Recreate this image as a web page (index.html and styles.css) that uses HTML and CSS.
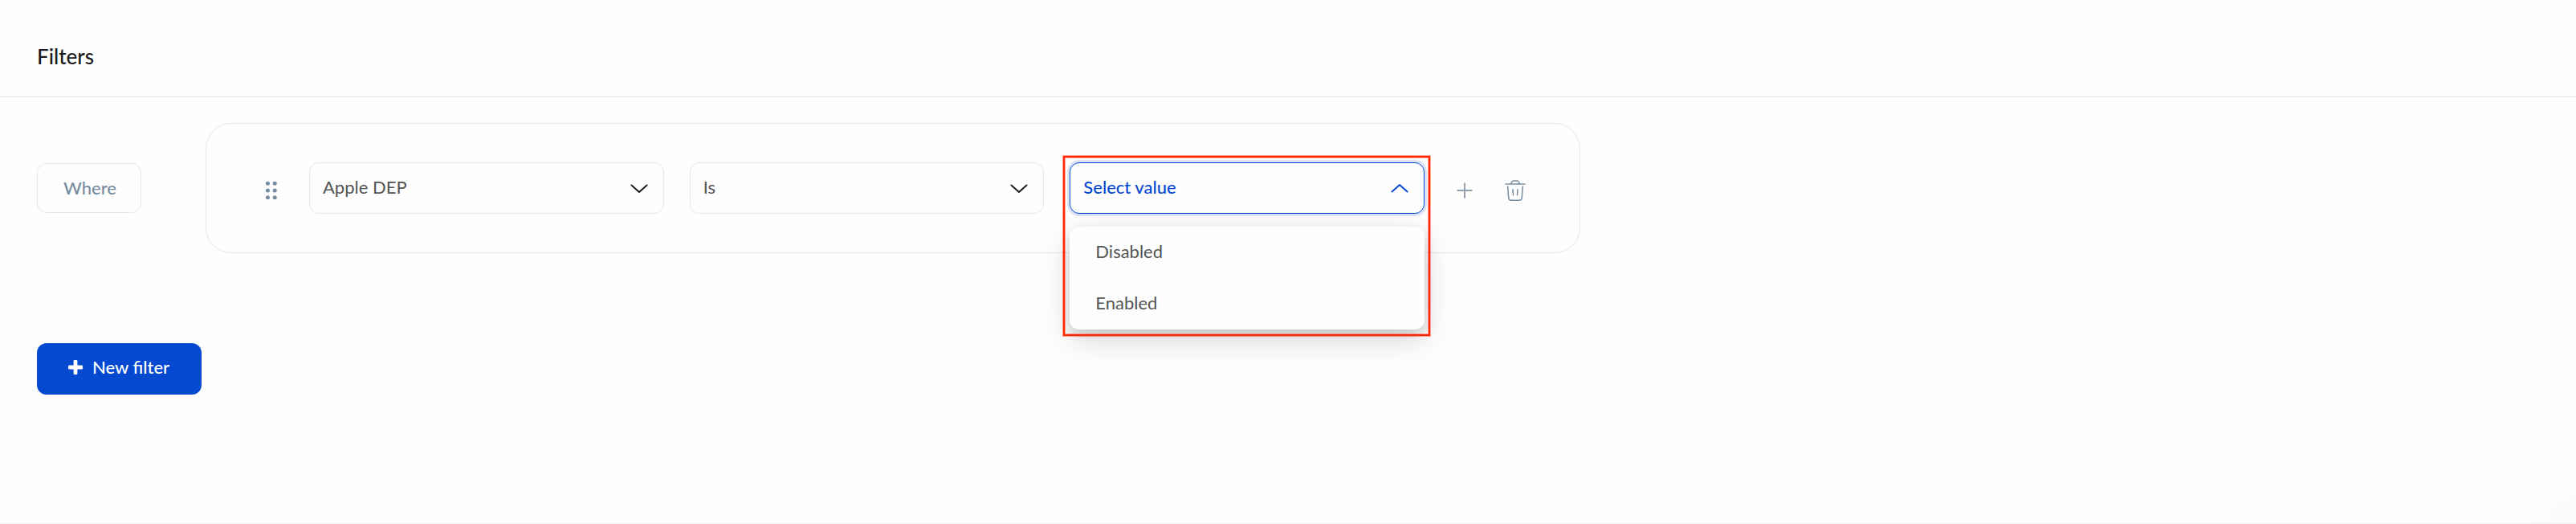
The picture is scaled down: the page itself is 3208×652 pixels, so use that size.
FILE: index.html
```html
<!DOCTYPE html>
<html lang="en">
<head>
<meta charset="utf-8">
<meta name="viewport" content="width=device-width, initial-scale=1">
<title>Filters</title>
<link rel="stylesheet" href="styles.css">
</head>
<body>
<div class="page">
  <header class="page-header">
    <h1 class="page-title">Filters</h1>
  </header>
  <main class="content">
    <div class="filter-row">
      <span class="where">Where</span>
      <section class="filter-card" aria-label="Filter condition">
        <button class="icon-button handle" type="button" aria-label="Reorder">
          <svg width="14" height="24" viewBox="0 0 14 24" fill="currentColor"><circle cx="2.4" cy="3.3" r="2.5"/><circle cx="11.2" cy="3.3" r="2.5"/><circle cx="2.4" cy="12" r="2.5"/><circle cx="11.2" cy="12" r="2.5"/><circle cx="2.4" cy="20.7" r="2.5"/><circle cx="11.2" cy="20.7" r="2.5"/></svg>
        </button>
        <div class="fields">
          <div class="field">
            <select class="select" aria-label="Attribute"><option>Apple DEP</option></select>
            <svg class="chevron" width="24" height="14" viewBox="0 0 24 14"><path d="M2.500 2.500 12 11l9.500-8.500"/></svg>
          </div>
          <div class="field">
            <select class="select" aria-label="Operator"><option>Is</option></select>
            <svg class="chevron" width="24" height="14" viewBox="0 0 24 14"><path d="M2.500 2.500 12 11l9.500-8.500"/></svg>
          </div>
          <div class="field field-open">
            <select class="select" aria-label="Value"><option>Select value</option></select>
            <svg class="chevron" width="24" height="14" viewBox="0 0 24 14"><path d="M2.500 10.500 12 2l9.500 8.500"/></svg>
            <ul class="menu" role="listbox" aria-label="Values">
              <li class="menu-item" role="option">Disabled</li>
              <li class="menu-item" role="option">Enabled</li>
            </ul>
            <div class="highlight"></div>
          </div>
        </div>
        <div class="actions">
          <button class="icon-button" type="button" aria-label="Add condition">
            <svg width="20" height="20" viewBox="0 0 20 20" fill="none" stroke="currentColor" stroke-width="2" opacity=".8"><path d="M10 .5v19M.5 10h19"/></svg>
          </button>
          <button class="icon-button" type="button" aria-label="Delete condition">
            <svg width="26" height="26" viewBox="0 0 26 26" fill="none" stroke="currentColor" stroke-width="1.500" stroke-linecap="round" stroke-linejoin="round"><path d="M1 5h24M7.800 4.700 8.600 2.500Q9.200 1 10.600 1h4.800q1.400 0 2 1.500l.8 2.200M3.700 8l1 14.200Q5 25.300 8 25.300h10q3 0 3.300-3.100L22.300 8M10 11.800l.5 7M16 11.800l-.5 7"/></svg>
          </button>
        </div>
      </section>
    </div>
    <button class="new-filter" type="button">
      <svg width="18" height="18" viewBox="0 0 18 18" fill="currentColor"><path d="M7.800 0h2.400q1.200 0 1.200 1.200v5.400h5.400q1.200 0 1.200 1.200v2.400q0 1.200-1.200 1.200h-5.400v5.400q0 1.200-1.200 1.200H7.800q-1.200 0-1.200-1.200v-5.400H1.200Q0 11.400 0 10.200V7.800q0-1.200 1.200-1.200h5.400V1.200Q6.600 0 7.800 0z"/></svg>
      <span>New filter</span>
    </button>
  </main>
</div>
</body>
</html>
```
FILE: styles.css
```css
* {
  box-sizing: border-box;
}

body {
  margin: 0;
  font-family: Lato, "Open Sans", sans-serif;
  font-size: 22px;
  line-height: 28px;
  color: #545454;
  background: #fefefe;
}

button,
select {
  font: inherit;
}

.page {
  display: flex;
  flex-direction: column;
  min-height: 100vh;
  border-bottom: 1px solid #f3f3f3;
  background: radial-gradient(circle at 100% 100%, #fafafa, #fefefe 80px);
}

.page-header {
  padding: 54px 46px 34px;
  border-bottom: 1px solid #e5e6e8;
}

.page-title {
  margin: 0;
  font-size: 26px;
  line-height: 32px;
  font-weight: 500;
  color: #1a1a1a;
}

.content {
  display: flex;
  flex-direction: column;
  align-items: flex-start;
  gap: 112px;
  padding: 32px 46px;
}

.filter-row {
  display: flex;
  align-items: center;
  gap: 80px;
  width: 100%;
}

.where {
  padding: 16px 30px 16px 32px;
  border: 1px solid #e5e7ec;
  border-radius: 12px;
  line-height: 28px;
  font-weight: 500;
  color: #758ca0;
}

.filter-card {
  display: flex;
  flex: 1;
  align-items: center;
  max-width: 1712px;
  padding: 48px 67px 48px 74px;
  border: 1px solid #e5e7ec;
  border-radius: 32px;
}

.icon-button {
  display: flex;
  padding: 0;
  border: 0;
  background: none;
  color: #758ca0;
}

.handle {
  margin-right: 40px;
  padding-top: 6px;
}

.fields {
  display: flex;
  flex: 1;
  gap: 32px;
}

.field {
  position: relative;
  flex: 1;
  color: #1a1a1a;
}

.select {
  display: block;
  width: 100%;
  height: 64px;
  padding: 0 56px 2px 16px;
  border: 1px solid #e5e7ec;
  border-radius: 12px;
  appearance: none;
  background: #fefefe;
  color: #545454;
}

.chevron {
  position: absolute;
  top: 26px;
  right: 19px;
  fill: none;
  stroke: currentColor;
  stroke-width: 2;
  stroke-linecap: round;
  stroke-linejoin: round;
  pointer-events: none;
}

.field-open {
  color: #0549d1;
}

.field-open .select {
  border-color: #0549d1;
  box-shadow: 0 0 0 3px #dae3f7;
  font-weight: 500;
  color: #0549d1;
}

.menu {
  position: absolute;
  top: 80px;
  left: 0;
  right: 0;
  margin: 0;
  padding: 0;
  border-radius: 12px;
  list-style: none;
  background: #fefefe;
  color: #545454;
  box-shadow: 0 12px 40px rgba(0, 0, 0, 0.16), 0 6px 12px rgba(0, 0, 0, 0.12);
}

.menu-item {
  padding: 17px 32px 19px;
}

.highlight {
  position: absolute;
  top: -8px;
  left: -8px;
  right: -7px;
  height: 224px;
  border: 2px solid #ff2600;
  box-shadow: 0 0 0 1px rgba(255, 38, 0, 0.4), inset 0 0 0 1px rgba(255, 38, 0, 0.4);
  pointer-events: none;
}

.actions {
  display: flex;
  align-items: center;
  gap: 40px;
  margin-left: 40px;
  padding-top: 6px;
}

.new-filter {
  display: flex;
  align-items: center;
  gap: 12px;
  padding: 16px 40px 20px 39px;
  border: 0;
  border-radius: 12px;
  font-weight: 500;
  color: #ffffff;
  background: #0549d1;
}
```
